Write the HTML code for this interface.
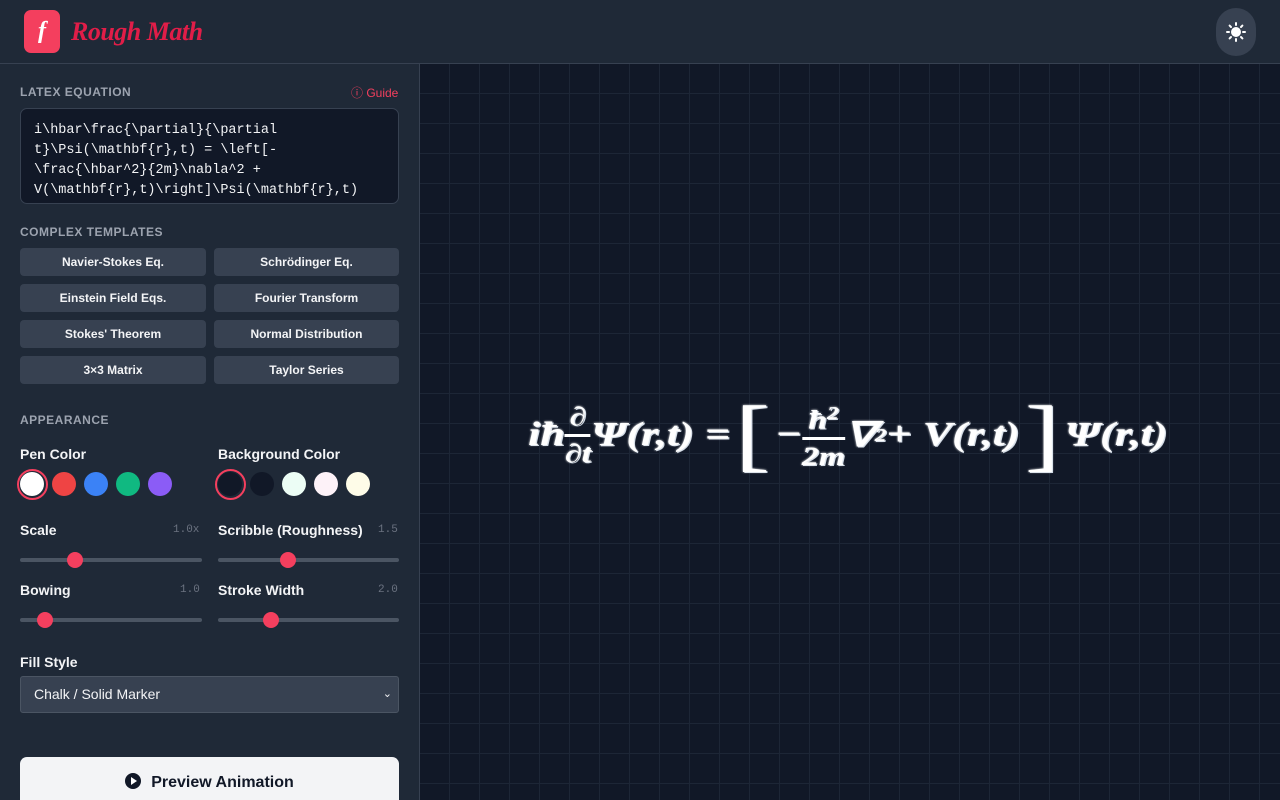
<!DOCTYPE html>
<html><head><meta charset="utf-8"><style>
*{box-sizing:border-box;margin:0;padding:0}
html,body{width:1280px;height:800px;overflow:hidden}
body{background:#111827;font-family:"Liberation Sans",sans-serif;color:#f3f4f6;position:relative}
.hdr{position:absolute;left:0;top:0;width:1280px;height:64px;background:#1f2937;border-bottom:1px solid #374151}
.logo{position:absolute;left:24px;top:10px;width:36px;height:43px;background:#f43f5e;border-radius:7px;color:#fff;font:italic bold 24px "Liberation Serif",serif;text-align:center;line-height:43px}
.brand{position:absolute;left:71px;top:17px;font:italic bold 26px "Liberation Serif",serif;color:#e11d48;letter-spacing:-0.5px}
.theme{position:absolute;left:1216px;top:8px;width:40px;height:48px;border-radius:20px;background:#374151}
.side{position:absolute;left:0;top:64px;width:420px;height:736px;background:#1f2937;border-right:1px solid #374151}
.canvas{position:absolute;left:420px;top:64px;width:860px;height:736px;background-color:#111827;background-image:linear-gradient(#1d2636 1px,transparent 1px),linear-gradient(90deg,#1d2636 1px,transparent 1px);background-size:30px 30px;background-position:-1px -1px}
.lbl{position:absolute;font-size:12px;font-weight:bold;color:#9ca3af;letter-spacing:0.5px}
.ta{position:absolute;left:20px;top:108px;width:379px;height:96px;background:#111827;border:1px solid #374151;border-radius:7px;padding:12px 13px;font:13.5px/20px "Liberation Mono",monospace;color:#f3f4f6;white-space:pre;overflow:hidden}
.btn{position:absolute;width:186px;height:28px;background:#374151;border-radius:4px;font-size:12px;font-weight:bold;text-align:center;line-height:28px;color:#f3f4f6}
.fl{position:absolute;font-size:14px;font-weight:bold;color:#f3f4f6}
.val{position:absolute;font:11px "Liberation Mono",monospace;color:#6b7280}
.dot{position:absolute;width:24px;height:24px;border-radius:50%}
.sel{position:absolute;width:31px;height:31px;border-radius:50%;border:2px solid #f43f5e}
.track{position:absolute;height:4px;background:#4b5563;border-radius:2px}
.knob{position:absolute;width:16px;height:16px;border-radius:50%;background:#f43f5e}
.eq{position:absolute;left:528px;top:385px;height:100px;display:flex;align-items:center;font:italic bold 34px "Liberation Serif",serif;color:#fff;white-space:nowrap;text-shadow:0 0 2px #fff,1px 1px 0 #cbd5e1;transform:scaleX(1.3);transform-origin:0 50%}
.fr{display:inline-flex;flex-direction:column;align-items:center;font-size:26px;line-height:30px}
.fr i{display:block;width:100%;border-top:3px solid #fff;margin:2px 0}
.up{font-size:18px;vertical-align:super}
</style></head><body>
<div class="hdr">
<div class="logo">f</div>
<div class="brand">Rough Math</div>
<div class="theme"><svg width="40" height="48" viewBox="0 0 40 48"><circle cx="20" cy="24" r="5" fill="#fff"/><g stroke="#fff" stroke-width="2" stroke-linecap="round"><path d="M20 15v2M20 31v2M11 24h2M27 24h2M13.6 17.6l1.4 1.4M25 29l1.4 1.4M13.6 30.4l1.4-1.4M25 19l1.4-1.4"/></g></svg></div>
</div>
<div class="side">
</div>
<div class="lbl" style="left:20px;top:85px">LATEX EQUATION</div>
<div style="position:absolute;left:351px;top:84px;font-size:12px;color:#f43f5e">ⓘ Guide</div>
<div class="ta">i\hbar\frac{\partial}{\partial
t}\Psi(\mathbf{r},t) = \left[-
\frac{\hbar^2}{2m}\nabla^2 +
V(\mathbf{r},t)\right]\Psi(\mathbf{r},t)</div>
<div class="lbl" style="left:20px;top:225px">COMPLEX TEMPLATES</div>
<div class="btn" style="left:20px;top:248px">Navier-Stokes Eq.</div>
<div class="btn" style="left:214px;top:248px;width:185px">Schrödinger Eq.</div>
<div class="btn" style="left:20px;top:284px">Einstein Field Eqs.</div>
<div class="btn" style="left:214px;top:284px;width:185px">Fourier Transform</div>
<div class="btn" style="left:20px;top:320px">Stokes' Theorem</div>
<div class="btn" style="left:214px;top:320px;width:185px">Normal Distribution</div>
<div class="btn" style="left:20px;top:356px">3×3 Matrix</div>
<div class="btn" style="left:214px;top:356px;width:185px">Taylor Series</div>
<div class="lbl" style="left:20px;top:413px">APPEARANCE</div>
<div class="fl" style="left:20px;top:446px">Pen Color</div>
<div class="fl" style="left:218px;top:446px">Background Color</div>
<div class="sel" style="left:17px;top:469px"></div>
<div class="dot" style="left:20px;top:472px;background:#fff"></div>
<div class="dot" style="left:52px;top:472px;background:#ef4444"></div>
<div class="dot" style="left:84px;top:472px;background:#3b82f6"></div>
<div class="dot" style="left:116px;top:472px;background:#10b981"></div>
<div class="dot" style="left:148px;top:472px;background:#8b5cf6"></div>
<div class="sel" style="left:215px;top:469px"></div>
<div class="dot" style="left:218px;top:472px;background:#111827"></div>
<div class="dot" style="left:250px;top:472px;background:#111827"></div>
<div class="dot" style="left:282px;top:472px;background:#ecfdf5"></div>
<div class="dot" style="left:314px;top:472px;background:#fdf2f8"></div>
<div class="dot" style="left:346px;top:472px;background:#fefce8"></div>
<div class="fl" style="left:20px;top:522px">Scale</div><div class="val" style="left:173px;top:524px">1.0x</div>
<div class="fl" style="left:218px;top:522px">Scribble (Roughness)</div><div class="val" style="left:378px;top:524px">1.5</div>
<div class="track" style="left:20px;top:558px;width:182px"></div><div class="knob" style="left:67px;top:552px"></div>
<div class="track" style="left:218px;top:558px;width:181px"></div><div class="knob" style="left:280px;top:552px"></div>
<div class="fl" style="left:20px;top:582px">Bowing</div><div class="val" style="left:180px;top:584px">1.0</div>
<div class="fl" style="left:218px;top:582px">Stroke Width</div><div class="val" style="left:378px;top:584px">2.0</div>
<div class="track" style="left:20px;top:618px;width:182px"></div><div class="knob" style="left:37px;top:612px"></div>
<div class="track" style="left:218px;top:618px;width:181px"></div><div class="knob" style="left:263px;top:612px"></div>
<div class="fl" style="left:20px;top:654px">Fill Style</div>
<div style="position:absolute;left:20px;top:676px;width:379px;height:37px;background:#374151;border:1px solid #4b5563;border-radius:3px;font-size:14px;line-height:35px;padding-left:13px">Chalk / Solid Marker<span style="position:absolute;right:6px;top:0;font-size:11px">⌄</span></div>
<div style="position:absolute;left:20px;top:757px;width:379px;height:50px;background:#f3f4f6;border-radius:7px;color:#111827;font-size:16px;font-weight:bold;text-align:center;line-height:52px"><span style="display:inline-block;width:16px;height:16px;border-radius:50%;background:#111827;vertical-align:-2px;margin-right:10px;position:relative"><span style="position:absolute;left:6px;top:4px;border-left:6px solid #fff;border-top:4px solid transparent;border-bottom:4px solid transparent"></span></span>Preview Animation</div>
<div class="canvas"></div>
<div class="eq">iħ<span class="fr"><span>∂</span><i></i><span>∂t</span></span>Ψ(r,t) = <span style="font-size:80px;font-style:normal;font-weight:normal;margin:0 4px">[</span>−<span class="fr"><span>ħ<span class="up">2</span></span><i></i><span>2m</span></span>∇<span class="up">2</span> + V(r,t)<span style="font-size:80px;font-style:normal;font-weight:normal;margin:0 4px">]</span>Ψ(r,t)</div>
</body></html>
